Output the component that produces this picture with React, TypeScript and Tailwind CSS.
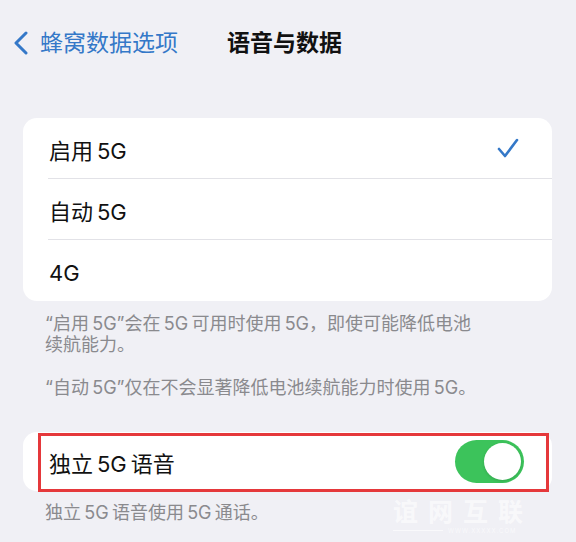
import React from "react";

const FONT = 'Inter, "Noto Sans CJK SC", sans-serif';

function Row({ label, check, last }: { label: React.ReactNode; check?: boolean; last?: boolean }) {
  return (
    <div className="relative flex items-center h-[61px] pl-[26px] pr-[33px]">
      <span className="text-[22px] leading-[28px] text-[#111] pt-[5px]">{label}</span>
      <div className="flex-1" />
      {check && (
        <svg width="22" height="21" viewBox="0 0 22 21" className="mt-[-1px]">
          <path d="M2 11 L8 18 L20 2" fill="none" stroke="#3478c8" strokeWidth="2.6" strokeLinecap="round" strokeLinejoin="round" />
        </svg>
      )}
      {!last && <div className="absolute left-[25px] right-0 bottom-0 h-px bg-[#e2e2e7]" />}
    </div>
  );
}

export default function App() {
  return (
    <div className="relative w-[576px] h-[542px] overflow-hidden bg-[#f0f0f5]" style={{ fontFamily: FONT }}>
      {/* nav */}
      <div className="flex items-center h-[28px] mt-[29px]">
        <svg width="16" height="24" viewBox="0 0 16 24" className="ml-[13px]">
          <path d="M13 2 L3 12 L13 22" fill="none" stroke="#3478c8" strokeWidth="3" strokeLinecap="round" strokeLinejoin="round" />
        </svg>
        <span className="ml-[11px] text-[23px] leading-[28px] text-[#3478c8]">蜂窝数据选项</span>
        <span className="ml-[49px] text-[23px] leading-[28px] font-bold text-[#111]">语音与数据</span>
      </div>

      {/* card 1 */}
      <div className="mt-[61px] ml-[23px] w-[529px] rounded-[14px] bg-white">
        <Row label={"启用\u20095G"} check />
        <Row label={"自动\u20095G"} />
        <Row label="4G" last />
      </div>

      <div className="mt-[12px] pl-[45px] text-[18px] leading-[21px] text-[#8a8a8e]">
        <div>{"“启用\u20095G”会在\u20095G\u2009可用时使用\u20095G，即使可能降低电池"}</div>
        <div>续航能力。</div>
        <div className="mt-[22px]">{"“自动\u20095G”仅在不会显著降低电池续航能力时使用\u20095G。"}</div>
      </div>

      {/* card 2 */}
      <div className="mt-[34px] ml-[23px] w-[529px] h-[59px] rounded-[14px] bg-white flex items-center pl-[26px] pr-[28px]">
        <span className="text-[22px] leading-[28px] text-[#111] pt-[4px]">{"独立\u20095G\u2009语音"}</span>
        <div className="flex-1" />
        <div className="w-[69px] h-[43px] rounded-full bg-[#3cc35b] flex items-center justify-end pr-[3px]">
          <div className="w-[37px] h-[37px] rounded-full bg-white shadow-[0_1px_3px_rgba(0,0,0,0.15)]" />
        </div>
      </div>

      <div className="mt-[11px] pl-[45px] text-[18px] leading-[21px] text-[#8a8a8e]">{"独立\u20095G\u2009语音使用\u20095G\u2009通话。"}</div>

      {/* red annotation box */}
      <div className="absolute left-[38px] top-[433px] w-[511px] h-[59px] border-[3px] border-[#e5383b]" />

      {/* watermark */}
      <div className="absolute left-[393px] top-[499px] flex flex-col text-white/60">
        <span className="text-[25px] leading-[27px] font-bold tracking-[10px]">谊网互联</span>
        <div className="flex items-center mt-[1px]">
          <div className="w-[50px] h-px bg-white/60" />
          <span className="ml-[5px] text-[6px] leading-[7px] tracking-[1px]">WWW.XXXXX.COM</span>
        </div>
      </div>
    </div>
  );
}
